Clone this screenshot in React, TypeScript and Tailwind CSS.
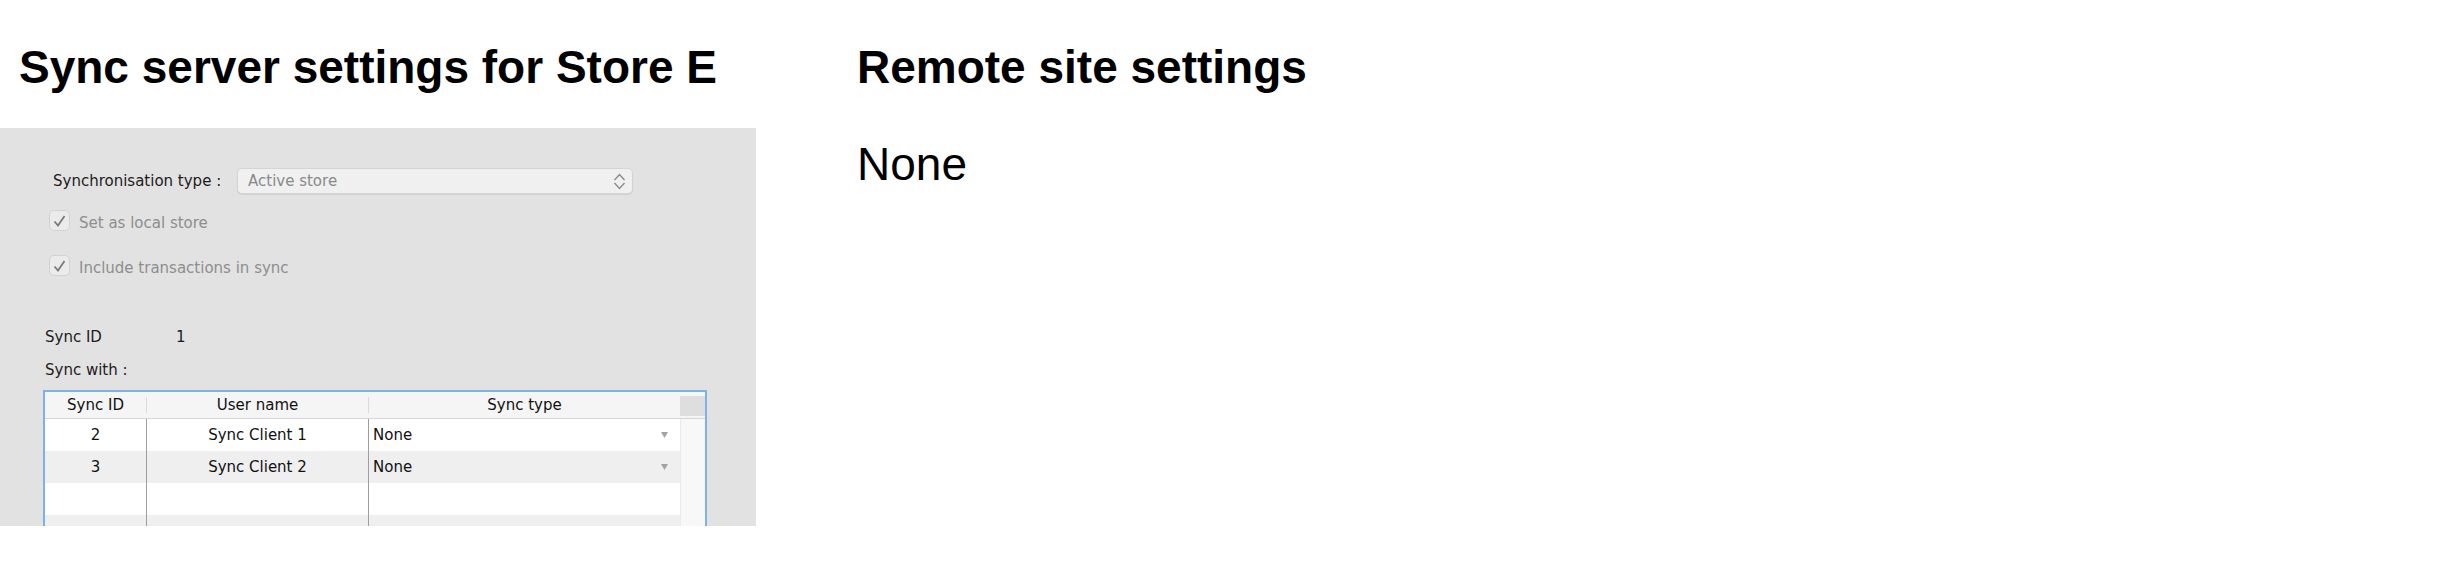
import React from "react";

const mac = { fontFamily: '"DejaVu Sans", "Liberation Sans", sans-serif' };
const arial = { fontFamily: '"Liberation Sans", Arial, sans-serif' };

const rows = [
  { id: "2", name: "Sync Client 1", type: "None" },
  { id: "3", name: "Sync Client 2", type: "None" },
  null,
  null,
];

function Chevrons() {
  return (
    <svg width="13" height="17" viewBox="0 0 13 17" fill="none">
      <path d="M1.5 7 L6.5 1.5 L11.5 7" stroke="#8c8c8c" strokeWidth="1.4" />
      <path d="M1.5 10 L6.5 15.5 L11.5 10" stroke="#8c8c8c" strokeWidth="1.4" />
    </svg>
  );
}

function CheckBox({ label }: { label: string }) {
  return (
    <div className="flex items-start pl-[49px]">
      <div className="w-[21px] h-[21px] rounded-[5px] border border-[#d2d2d2] bg-[#ebebeb] flex items-center justify-center">
        <svg width="13" height="12" viewBox="0 0 13 12" fill="none">
          <path d="M1.5 6.5 L5 10.5 L11.5 1" stroke="#7a7a7a" strokeWidth="1.8" />
        </svg>
      </div>
      <span className="ml-[9px] mt-[4px] text-[15px] leading-[18px] text-[#8e8e8e]">{label}</span>
    </div>
  );
}

function Caret() {
  return (
    <svg width="7" height="6" viewBox="0 0 7 6">
      <polygon points="0,0 7,0 3.5,6" fill="#a3a3a3" />
    </svg>
  );
}

export default function App() {
  return (
    <div className="w-[2449px] h-[575px] bg-white overflow-hidden flex">
      <div className="w-[756px] flex flex-col">
        <h2 className="mt-[44px] pl-[19px] text-[46px] leading-[46px] font-bold text-black" style={arial}>
          Sync server settings for Store E
        </h2>
        <div className="mt-[38px] h-[398px] bg-[#e2e2e2] overflow-hidden flex flex-col" style={mac}>
          {/* sync type */}
          <div className="mt-[40px] h-[26px] flex items-center pl-[53px]">
            <span className="w-[184px] text-[15px] leading-[18px] text-[#1c1c1c]">Synchronisation type :</span>
            <div className="w-[396px] h-[26px] rounded-[5px] bg-[#f0f0f0] border border-[#d4d4d4] shadow-[0_1px_1px_rgba(0,0,0,0.08)] flex items-center justify-between pl-[10px] pr-[6px]">
              <span className="text-[15px] leading-[18px] text-[#8a8a8a]">Active store</span>
              <Chevrons />
            </div>
          </div>
          <div className="mt-[16px]">
            <CheckBox label="Set as local store" />
          </div>
          <div className="mt-[23px]">
            <CheckBox label="Include transactions in sync" />
          </div>

          {/* sync id */}
          <div className="mt-[51px] flex pl-[45px] text-[15px] leading-[18px] text-[#1c1c1c]">
            <span className="w-[131px]">Sync ID</span>
            <span>1</span>
          </div>
          <div className="mt-[15px] pl-[45px] text-[15px] leading-[18px] text-[#1c1c1c]">Sync with :</div>

          {/* table */}
          <div className="mt-[11px] ml-[43px] w-[664px] border-2 border-[#7db1ea] bg-white text-[15px] leading-[18px] text-[#111]">
            <div className="flex h-[27px] bg-[#f5f5f5] border-b border-[#d6d6d6]">
              <div className="w-[101px] flex items-center justify-center">Sync ID</div>
              <div className="w-[222px] flex items-center justify-center border-l border-[#dadada] my-[5px]">User name</div>
              <div className="w-[312px] flex items-center justify-center border-l border-[#dadada] my-[5px]">Sync type</div>
              <div className="flex-1 bg-[#dedede] mt-[4px] mb-[2px]"></div>
            </div>
            {rows.map((r, i) => (
              <div key={i} className="flex h-[32px]">
                <div className={`w-[101px] flex items-center justify-center ${i % 2 ? "bg-[#efefef]" : "bg-white"}`}>{r?.id}</div>
                <div className={`w-[222px] flex items-center justify-center border-l border-[#9e9e9e] ${i % 2 ? "bg-[#efefef]" : "bg-white"}`}>{r?.name}</div>
                <div className={`w-[312px] flex items-center justify-between border-l border-[#9e9e9e] pl-[4px] pr-[12px] ${i % 2 ? "bg-[#efefef]" : "bg-white"}`}>
                  <span>{r?.type}</span>
                  {r && <Caret />}
                </div>
                <div className="flex-1 bg-[#f8f8f8] border-l border-[#ebebeb]"></div>
              </div>
            ))}
          </div>
        </div>
      </div>

      <div className="ml-[101px] flex flex-col text-black" style={arial}>
        <h2 className="mt-[44px] text-[46px] leading-[46px] font-bold">Remote site settings</h2>
        <p className="mt-[51px] text-[46px] leading-[46px]">None</p>
      </div>
    </div>
  );
}
